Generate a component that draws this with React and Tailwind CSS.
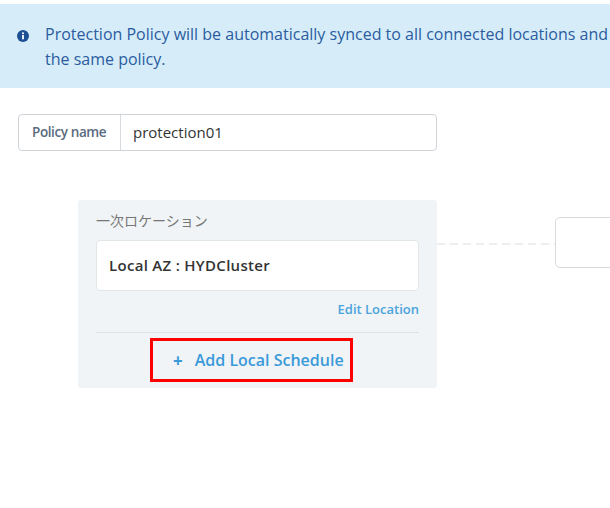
export default function App() {
  return (
    <div
      className="w-[610px] h-[508px] bg-white overflow-hidden relative"
      style={{ fontFamily: '"Open Sans", "Noto Sans CJK JP", sans-serif' }}
    >
      {/* info banner */}
      <div className="mt-[4px] h-[84px] bg-[#d6edf9] flex items-start pl-[17px] pt-[18px]">
        <svg width="12" height="12" viewBox="0 0 12 12" className="mt-[8px] shrink-0">
          <circle cx="6" cy="6" r="6" fill="#1d4f94" />
          <rect x="5.1" y="5" width="1.8" height="4.3" fill="#fff" />
          <circle cx="6" cy="3.2" r="1" fill="#fff" />
        </svg>
        <p className="ml-[16px] text-[16px] leading-[25px] font-medium text-[#2b5ca0] whitespace-nowrap">
          Protection Policy will be automatically synced to all connected locations and
          <br />
          the same policy.
        </p>
      </div>

      {/* policy name field */}
      <div className="mt-[26px] ml-[18px] w-[419px] h-[37px] flex border border-[#cfd4d9] rounded-[4px] bg-white">
        <div className="w-[102px] border-r border-[#d6dade] flex items-center pl-[13px] text-[13.5px] font-semibold text-[#5a6b80] tracking-[-0.4px]">
          Policy name
        </div>
        <div className="flex items-center pl-[12px] text-[15px] text-[#333]">protection01</div>
      </div>

      {/* location canvas */}
      <div className="mt-[49px] flex items-start">
        <div className="ml-[78px] w-[359px] shrink-0 bg-[#f0f4f6] rounded-[3px] px-[18px] pt-[11px] pb-[6px]">
          <div className="text-[14px] leading-[20px] text-[#777]">一次ロケーション</div>
          <div className="mt-[9px] h-[51px] bg-white border border-[#e1e6e9] rounded-[4px] flex items-center pl-[12px] text-[15px] font-semibold text-[#333] tracking-[0.3px]">
            Local AZ : HYDCluster
          </div>
          <div className="mt-[9px] text-right text-[13px] leading-[18px] font-semibold text-[#4ba3dd]">
            Edit Location
          </div>
          <div className="mt-[14px] h-px bg-[#dde2e5]" />
          <div className="mt-[5px] ml-[54px] w-[203px] h-[44px] border-[3px] border-[#ff0000] flex items-center pl-[20px] text-[16px] font-semibold text-[#3a9ad9]">
            <span className="text-[17px] leading-none font-bold">+</span>
            <span className="ml-[12px]">Add Local Schedule</span>
          </div>
        </div>
        <svg width="118" height="2" className="mt-[43px] shrink-0">
          <line x1="0" y1="1" x2="118" y2="1" stroke="#d9dee1" strokeWidth="1.2" strokeDasharray="8 5" />
        </svg>
        <div className="mt-[17px] w-[80px] h-[51px] shrink-0 border border-[#d6dbde] rounded-[5px] bg-white" />
      </div>
    </div>
  );
}
